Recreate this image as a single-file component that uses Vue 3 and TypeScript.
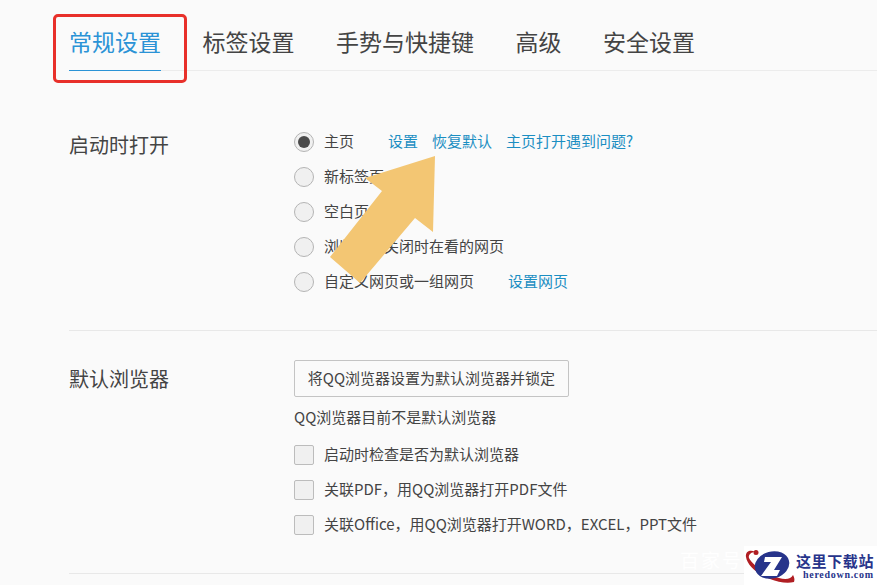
<script setup lang="ts">
const tabs = ["常规设置", "标签设置", "手势与快捷键", "高级", "安全设置"];

const startup = [
  { label: "主页", checked: true, links: ["设置", "恢复默认", "主页打开遇到问题?"] },
  { label: "新标签页", checked: false, links: [] },
  { label: "空白页", checked: false, links: [] },
  { label: "浏览上次关闭时在看的网页", checked: false, links: [] },
  { label: "自定义网页或一组网页", checked: false, links: ["设置网页"] },
];

const checks = [
  "启动时检查是否为默认浏览器",
  "关联PDF，用QQ浏览器打开PDF文件",
  "关联Office，用QQ浏览器打开WORD，EXCEL，PPT文件",
];
</script>

<template>
  <div class="page">
    <nav class="tabs">
      <a v-for="(t, i) in tabs" :key="t" class="tab" :class="{ active: i === 0 }">{{ t }}</a>
    </nav>

    <section class="section first">
      <h2 class="title">启动时打开</h2>
      <div class="body">
        <div v-for="r in startup" :key="r.label" class="row">
          <span class="radio" :class="{ on: r.checked }" />
          <span class="label">{{ r.label }}</span>
          <span v-if="r.links.length" class="links">
            <a v-for="l in r.links" :key="l" class="link">{{ l }}</a>
          </span>
        </div>
      </div>
    </section>

    <section class="section second">
      <h2 class="title">默认浏览器</h2>
      <div class="body">
        <button class="btn">将QQ浏览器设置为默认浏览器并锁定</button>
        <p class="note">QQ浏览器目前不是默认浏览器</p>
        <div v-for="c in checks" :key="c" class="row">
          <span class="check" />
          <span class="label">{{ c }}</span>
        </div>
      </div>
    </section>

    <!-- annotations pasted over the screenshot -->
    <div class="redbox" />
    <svg class="arrow" width="877" height="585" viewBox="0 0 877 585" aria-hidden="true">
      <polygon points="435,156 365,178 382,191 330,257 360,283 415,218 433,232" fill="#f3c673" />
    </svg>

    <div class="faint">百家号</div>
    <div class="mark">
      <svg class="mark-logo" width="52" height="39" viewBox="0 0 52 39" aria-hidden="true">
        <path d="M11 6 C6 3 1 6 2 11 C3 19 13 28 26 33 C34 36 43 38 50 36 C51 33 50 31 49 29 C47 33 42 34 35 32 C24 29 9 20 5 12 C4 9 7 6 11 6 Z" fill="#b01e23" />
        <circle cx="12" cy="6.5" r="2.5" fill="#b01e23" />
        <ellipse cx="28" cy="19" rx="17.5" ry="13.5" transform="rotate(-15 28 19)" fill="#27348b" />
        <path d="M21 11 H38 L30 24 H36 L33 30 H17 L27 16 H20 Z" fill="#fff" />
      </svg>
      <div class="mark-text">
        <div class="mark-cn">这里下载站</div>
        <div class="mark-en">heredown.com</div>
      </div>
    </div>
  </div>
</template>

<style>
html, body {
  margin: 0;
  background: #fafafa;
}
</style>

<style scoped>
.page {
  position: relative;
  width: 877px;
  height: 585px;
  overflow: hidden;
  background: #fafafa;
  color: #444;
  font-family: "Noto Sans CJK SC", "Liberation Sans", sans-serif;
  font-size: 15px;
}

.tabs {
  display: flex;
  gap: 41.5px;
  height: 70px;
  margin-left: 69px;
  border-bottom: 1px solid #ececec;
}
.tab {
  height: 70px;
  line-height: 83px;
  font-size: 23px;
  color: #444;
  white-space: nowrap;
}
.tab.active {
  color: #2b93d6;
  border-bottom: 1px solid #2b93d6;
}

.section {
  display: flex;
  margin-left: 69px;
}
.first {
  height: 259px;
  border-bottom: 1px solid #e8e8e8;
}
.second {
  height: 242px;
  border-bottom: 1px solid #e8e8e8;
}
.title {
  width: 225px;
  margin: 0;
  font-size: 20px;
  font-weight: 400;
  color: #444;
  line-height: 28px;
}
.first .title {
  padding-top: 60px;
}
.second .title {
  padding-top: 34px;
}
.first .body {
  padding-top: 53px;
}
.second .body {
  padding-top: 29px;
}

.row {
  display: flex;
  align-items: center;
  height: 35px;
}
.radio {
  width: 18px;
  height: 18px;
  border: 1px solid #b4b4b4;
  border-radius: 50%;
  background: #f0f0f0;
  margin-right: 10px;
  position: relative;
}
.radio.on::after {
  content: "";
  position: absolute;
  inset: 3px;
  border-radius: 50%;
  background: #4a4a4a;
}
.check {
  width: 18px;
  height: 18px;
  border: 1px solid #bcbcbc;
  border-radius: 2px;
  background: #f0f0f0;
  margin-right: 10px;
}
.label {
  white-space: nowrap;
  line-height: 20px;
  margin-top: -2px;
}
.links {
  display: flex;
  gap: 14px;
  margin-left: 34px;
  line-height: 20px;
  margin-top: -2px;
}
.link {
  color: #1b8ec2;
  white-space: nowrap;
}

.btn {
  display: block;
  width: 275px;
  height: 37px;
  padding: 0 0 3px;
  border: 1px solid #c4c4c4;
  border-radius: 2px;
  background: #fafafa;
  color: #444;
  font: inherit;
}
.note {
  margin: 10px 0 10px;
  line-height: 20px;
}

.redbox {
  position: absolute;
  left: 53px;
  top: 14px;
  width: 134px;
  height: 69px;
  box-sizing: border-box;
  border: 3px solid #e8302a;
  border-radius: 5px;
}
.arrow {
  position: absolute;
  left: 0;
  top: 0;
}
.faint {
  position: absolute;
  left: 680px;
  top: 547px;
  font-size: 19px;
  line-height: 26px;
  color: #fff;
  letter-spacing: 2px;
}
.mark {
  position: absolute;
  left: 744px;
  top: 546px;
  width: 133px;
  height: 39px;
  display: flex;
  background: #fff;
}
.mark-logo {
  flex: none;
}
.mark-text {
  padding-top: 7px;
}
.mark-cn {
  font-size: 15px;
  line-height: 16px;
  height: 16px;
  font-weight: 700;
  color: #27348b;
  letter-spacing: 0.6px;
  white-space: nowrap;
}
.mark-en {
  font-family: "Liberation Serif", serif;
  font-size: 10px;
  line-height: 11px;
  font-weight: 700;
  color: #27348b;
  letter-spacing: 0.7px;
  padding-left: 7px;
  white-space: nowrap;
}
</style>
